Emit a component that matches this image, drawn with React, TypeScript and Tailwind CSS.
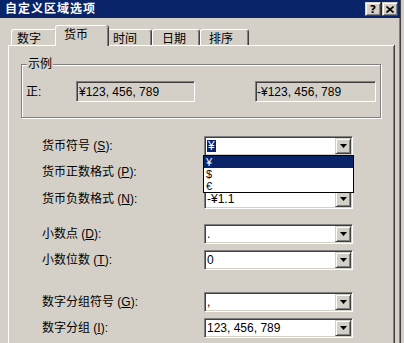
import React from "react";

const raised =
  "border border-t-[#d4d0c8] border-l-[#d4d0c8] border-r-[#404040] border-b-[#404040] shadow-[inset_1px_1px_0_#fff,inset_-1px_-1px_0_#808080]";
const sunken =
  "border border-t-[#808080] border-l-[#808080] border-r-white border-b-white shadow-[inset_1px_1px_0_#404040,inset_-1px_-1px_0_#d4d0c8]";

function Arrow() {
  return (
    <svg width="7" height="4" viewBox="0 0 7 4">
      <path d="M0 0h7L3.5 4z" fill="#000" />
    </svg>
  );
}

function Tab({ label, width, pad, active }: { label: string; width: string; pad: string; active?: boolean }) {
  if (active) {
    return (
      <div
        className={`relative z-10 -mb-px -mx-[2px] flex h-[21px] ${width} ${pad} items-start rounded-t-[3px] border-l border-t border-white bg-[#d4d0c8] pt-[3px] shadow-[inset_-1px_0_0_#808080,1px_0_0_#404040]`}
      >
        <span className="leading-[12px]">{label}</span>
      </div>
    );
  }
  return (
    <div
      className={`flex h-[16px] ${width} ${pad} items-start rounded-t-[3px] border-l border-t border-white pt-[3px] shadow-[inset_-1px_0_0_#808080,inset_-2px_0_0_#d4d0c8] border-r border-r-[#404040]`}
    >
      <span className="leading-[12px]">{label}</span>
    </div>
  );
}

function Label({ text, k }: { text: string; k: string }) {
  return (
    <div className="w-[162px] shrink-0 leading-[12px]">
      {text} (<span className="underline underline-offset-1">{k}</span>):
    </div>
  );
}

function Combo({ children, list }: { children?: React.ReactNode; list?: React.ReactNode }) {
  return (
    <div className={`relative flex h-[20px] w-[149px] items-center bg-white ${sunken}`}>
      <div className="flex-1 overflow-hidden whitespace-nowrap pl-[2px] leading-[12px]">{children}</div>
      <div className={`mr-[1px] flex h-[16px] w-[16px] items-center justify-center bg-[#d4d0c8] ${raised}`}>
        <Arrow />
      </div>
      {list}
    </div>
  );
}

function Row({ text, k, children, list, className = "" }: { text: string; k: string; children?: React.ReactNode; list?: React.ReactNode; className?: string }) {
  return (
    <div className={`flex h-[20px] items-center ${className}`}>
      <Label text={text} k={k} />
      <Combo list={list}>{children}</Combo>
    </div>
  );
}

export default function App() {
  // open list of the currency symbol combo, drawn over the rows below it
  const dropdown = (
    <div className="absolute left-[-2px] top-[18px] z-20 w-[151px] border border-black bg-white text-[11px]">
      <div className="flex h-[12px] items-center bg-[#0a246a] pl-[2px] leading-[11px] text-white">¥</div>
      <div className="flex h-[12px] items-center pl-[2px] leading-[11px]">$</div>
      <div className="flex h-[12px] items-center pl-[2px] leading-[11px]">€</div>
    </div>
  );

  return (
    <div className="h-[343px] w-[404px] overflow-hidden bg-[#d4d0c8] font-['Liberation_Sans','Noto_Sans_CJK_SC',sans-serif] text-[12px] text-black">
      <div className="h-full w-[401px] shadow-[inset_-1px_0_0_#404040,inset_-2px_0_0_#808080]">
        {/* Title bar */}
        <div className="flex h-[18px] w-[400px] items-center justify-between bg-[#0a246a] pl-[5px] pr-[2px]">
          <span className="text-[12px] font-bold leading-[12px] tracking-[1px] text-white">自定义区域选项</span>
          <div className="flex gap-[1px]">
            <div className={`flex h-[14px] w-[16px] items-center justify-center bg-[#d4d0c8] ${raised}`}>
              <span className="font-['DejaVu_Sans',sans-serif] text-[11px] font-bold leading-[11px]">?</span>
            </div>
            <div className={`flex h-[14px] w-[16px] items-center justify-center bg-[#d4d0c8] ${raised}`}>
              <svg width="8" height="7" viewBox="0 0 8 7">
                <path d="M0.5 0.5L7.5 6.5M7.5 0.5L0.5 6.5" stroke="#000" strokeWidth="1.6" />
              </svg>
            </div>
          </div>
        </div>

        {/* Tabs */}
        <div className="mt-[8px] flex h-[19px] items-end pl-[11px]">
          <Tab label="数字" width="w-[46px]" pad="pl-[5px]" />
          <Tab label="货币" width="w-[53px]" pad="pl-[8px]" active />
          <Tab label="时间" width="w-[46px]" pad="pl-[6px]" />
          <Tab label="日期" width="w-[48px]" pad="pl-[9px]" />
          <Tab label="排序" width="w-[49px]" pad="pl-[8px]" />
        </div>

        {/* Tab panel */}
        <div className="ml-[8px] h-[320px] w-[386px] border-l border-t border-white shadow-[inset_-1px_0_0_#808080,1px_0_0_#404040]">
          {/* 示例 group */}
          <div className="relative ml-[12px] mt-[18px] h-[54px] w-[360px] border border-[#808080] shadow-[inset_1px_1px_0_#fff,1px_1px_0_#fff]">
            <span className="absolute left-[5px] top-[-7px] bg-[#d4d0c8] px-[1px] leading-[12px]">示例</span>
            <div className="mt-[16px] flex items-center pl-[4px]">
              <span className="w-[50px] leading-[12px]">正:</span>
              <div className={`flex h-[21px] w-[119px] items-center pl-[2px] ${sunken} shadow-[inset_1px_1px_0_#404040]`}>
                <span className="leading-[12px]">¥123, 456, 789</span>
              </div>
              <div className={`ml-[60px] flex h-[21px] w-[121px] items-center pl-[1px] ${sunken} shadow-[inset_1px_1px_0_#404040]`}>
                <span className="leading-[12px]">-¥123, 456, 789</span>
              </div>
            </div>
          </div>

          {/* Settings */}
          <div className="mt-[18px] flex flex-col pl-[33px]">
            <Row text="货币符号" k="S" list={dropdown}>
              <span className="bg-[#0a246a] px-[1px] text-white">¥</span>
            </Row>
            <Row text="货币正数格式" k="P" className="mt-[6px]" />
            <Row text="货币负数格式" k="N" className="mt-[7px]">-¥1.1</Row>
            <Row text="小数点" k="D" className="mt-[15px]">.</Row>
            <Row text="小数位数" k="T" className="mt-[6px]">0</Row>
            <Row text="数字分组符号" k="G" className="mt-[22px]">,</Row>
            <Row text="数字分组" k="I" className="mt-[6px]">123, 456, 789</Row>
          </div>
        </div>
      </div>
    </div>
  );
}
